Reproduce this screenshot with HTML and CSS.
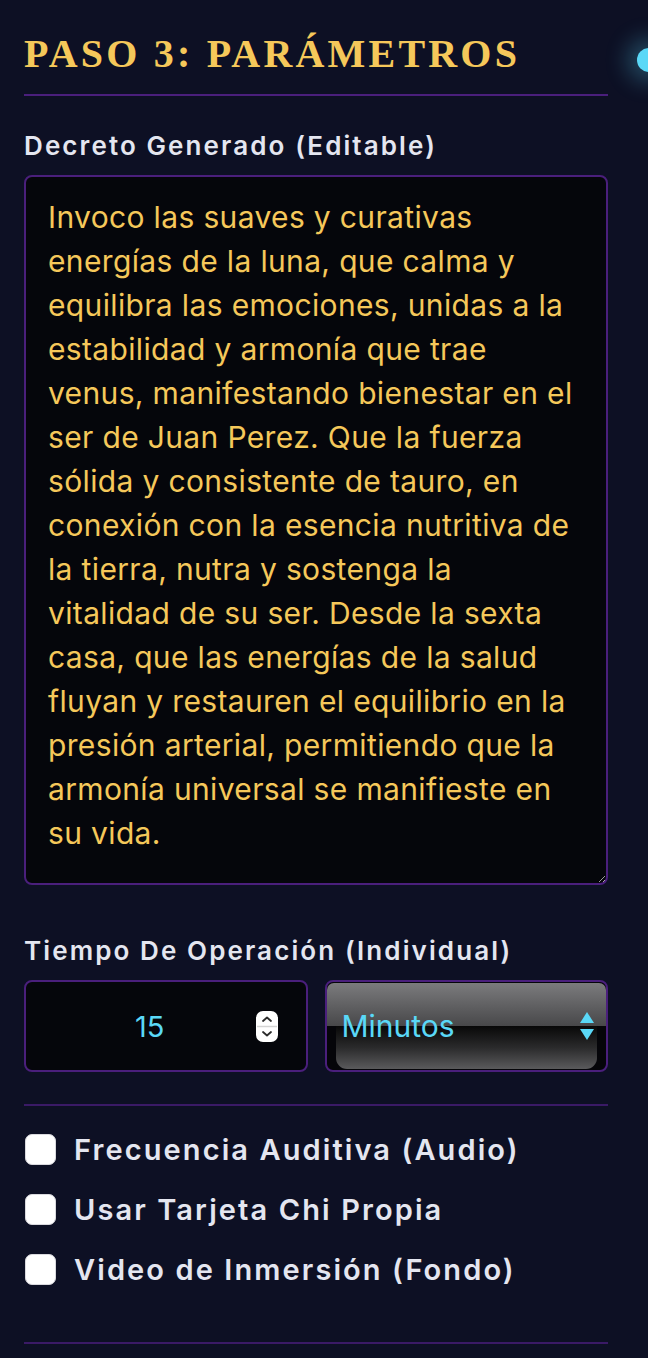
FILE: index.html
```html
<!DOCTYPE html>
<html lang="es">
<head>
<meta charset="utf-8">
<title>Paso 3: Parámetros</title>
<link rel="stylesheet" href="styles.css">
</head>
<body>
<div class="glow-dot"></div>
<main class="panel">
  <h2 class="step-title">PASO 3: PARÁMETROS</h2>

  <section class="field">
    <label class="field-label" for="decreto">Decreto Generado (Editable)</label>
    <textarea id="decreto" class="decree">Invoco las suaves y curativas energías de la luna, que calma y equilibra las emociones, unidas a la estabilidad y armonía que trae venus, manifestando bienestar en el ser de Juan Perez. Que la fuerza sólida y consistente de tauro, en conexión con la esencia nutritiva de la tierra, nutra y sostenga la vitalidad de su ser. Desde la sexta casa, que las energías de la salud fluyan y restauren el equilibrio en la presión arterial, permitiendo que la armonía universal se manifieste en su vida.</textarea>
  </section>

  <section class="field field-time">
    <label class="field-label" for="tiempo">Tiempo De Operación (Individual)</label>
    <div class="time-row">
      <div class="number-box">
        <input id="tiempo" class="number-input" type="number" value="15">
        <svg class="spinner" width="22" height="31" viewBox="0 0 22 31" aria-hidden="true">
          <rect x="0" y="0" width="22" height="31" rx="7" fill="#ffffff"/>
          <line x1="1" y1="15.5" x2="21" y2="15.5" stroke="#d4d4d4" stroke-width="1.5"/>
          <polyline points="7,10 11,6.5 15,10" fill="none" stroke="#2b2b2b" stroke-width="1.8" stroke-linecap="round" stroke-linejoin="round"/>
          <polyline points="7,21 11,24.5 15,21" fill="none" stroke="#2b2b2b" stroke-width="1.8" stroke-linecap="round" stroke-linejoin="round"/>
        </svg>
      </div>
      <div class="select-box">
        <div class="gloss-top"></div>
        <div class="gloss-bottom"></div>
        <select class="unit-select">
          <option>Minutos</option>
          <option>Horas</option>
        </select>
        <svg class="select-arrows" width="14" height="29" viewBox="0 0 14 29" aria-hidden="true">
          <polygon points="7,0 14,11 0,11" fill="#5ad8f7"/>
          <polygon points="0,17 14,17 7,28" fill="#5ad8f7"/>
        </svg>
      </div>
    </div>
  </section>

  <section class="options">
    <label class="option"><input type="checkbox" class="check"><span>Frecuencia Auditiva (Audio)</span></label>
    <label class="option"><input type="checkbox" class="check"><span>Usar Tarjeta Chi Propia</span></label>
    <label class="option"><input type="checkbox" class="check"><span>Video de Inmersión (Fondo)</span></label>
  </section>
</main>
</body>
</html>
```

FILE: styles.css
```css
* { box-sizing: border-box; }

html, body {
  margin: 0;
  padding: 0;
}

body {
  background: #0d1024;
  color: #e4e6f0;
  font-family: "Inter", "DejaVu Sans", sans-serif;
  overflow: hidden;
  min-height: 1358px;
  position: relative;
}

.glow-dot {
  position: absolute;
  top: 48px;
  left: 637px;
  width: 24px;
  height: 24px;
  border-radius: 50%;
  background: #5ad8f7;
  box-shadow: 0 0 22px 10px rgba(90, 216, 247, 0.28);
}

.panel {
  width: 608px;
  padding: 30px 0 0 24px;
}

.step-title {
  margin: 0;
  font-family: "Liberation Serif", "DejaVu Serif", serif;
  font-weight: 700;
  font-size: 40px;
  line-height: 48px;
  letter-spacing: 3.2px;
  color: #f5c85a;
  padding-bottom: 16px;
  border-bottom: 2px solid #4a1f7c;
}

.field {
  display: flex;
  flex-direction: column;
  gap: 14px;
  margin-top: 35px;
}

.field-time {
  margin-top: 51px;
}

.field-label {
  font-size: 26px;
  line-height: 30px;
  font-weight: 600;
  letter-spacing: 2.1px;
  color: #e4e6f0;
}

.decree {
  display: block;
  width: 100%;
  height: 710px;
  margin: 0;
  padding: 18px 27px 18px 22px;
  background: #05060b;
  border: 2px solid #4a1f7c;
  border-radius: 8px;
  color: #f5c85a;
  font-family: "Inter", "DejaVu Sans", sans-serif;
  font-size: 30px;
  line-height: 44px;
  letter-spacing: 0.35px;
  resize: vertical;
  outline: none;
}

.time-row {
  display: grid;
  grid-template-columns: minmax(0, 1fr) minmax(0, 1fr);
  gap: 17px;
  height: 92px;
}

.number-box {
  display: flex;
  align-items: center;
  min-width: 0;
  background: #05060b;
  border: 2px solid #4a1f7c;
  border-radius: 8px;
}

.number-input {
  flex: 1;
  min-width: 0;
  width: 0;
  height: 100%;
  background: transparent;
  border: none;
  outline: none;
  color: #5ad8f7;
  font-family: "Inter", "DejaVu Sans", sans-serif;
  font-size: 29px;
  text-align: center;
  padding: 0 0 0 18px;
  -moz-appearance: textfield;
}

.number-input::-webkit-inner-spin-button,
.number-input::-webkit-outer-spin-button {
  -webkit-appearance: none;
  margin: 0;
}

.spinner {
  flex: none;
  margin-right: 28px;
}

.select-box {
  display: grid;
  grid-template-rows: 1fr 1fr;
  grid-template-columns: minmax(0, 1fr);
  min-width: 0;
  background: #050509;
  border: 2px solid #4a1f7c;
  border-radius: 8px;
}

.gloss-top {
  grid-area: 1 / 1;
  margin-top: 1px;
  border-radius: 7px 7px 0 0;
  background: linear-gradient(to bottom, #7b7b7d 0%, #5f5f61 55%, #48484a 100%);
}

.gloss-bottom {
  grid-area: 2 / 1;
  margin: 0 9px 1px 9px;
  border-radius: 0 0 11px 11px;
  background: linear-gradient(to bottom, #080808 0%, #2a2a2b 50%, #5a5a5c 100%);
}

.unit-select {
  grid-area: 1 / 1 / 3 / 2;
  z-index: 1;
  width: 100%;
  -webkit-appearance: none;
  appearance: none;
  background: transparent;
  border: none;
  outline: none;
  color: #5ad8f7;
  font-family: "Inter", "DejaVu Sans", sans-serif;
  font-size: 30px;
  padding: 0 0 0 15px;
  margin: 0;
}

.select-arrows {
  grid-area: 1 / 1 / 3 / 2;
  z-index: 2;
  justify-self: end;
  align-self: center;
  margin-right: 12px;
  pointer-events: none;
}

.options {
  margin-top: 32px;
  border-top: 2px solid #3a1a66;
  border-bottom: 2px solid #3a1a66;
  padding: 28px 0 57px 1px;
  display: flex;
  flex-direction: column;
  gap: 29px;
}

.option {
  display: flex;
  align-items: center;
  gap: 18px;
  font-size: 29px;
  line-height: 31px;
  font-weight: 600;
  letter-spacing: 2.1px;
  color: #e4e6f0;
}

.check {
  -webkit-appearance: none;
  appearance: none;
  flex: none;
  width: 31px;
  height: 31px;
  margin: 0;
  border-radius: 7px;
  background: #ffffff;
  border: 1px solid #d9d9de;
}
```
